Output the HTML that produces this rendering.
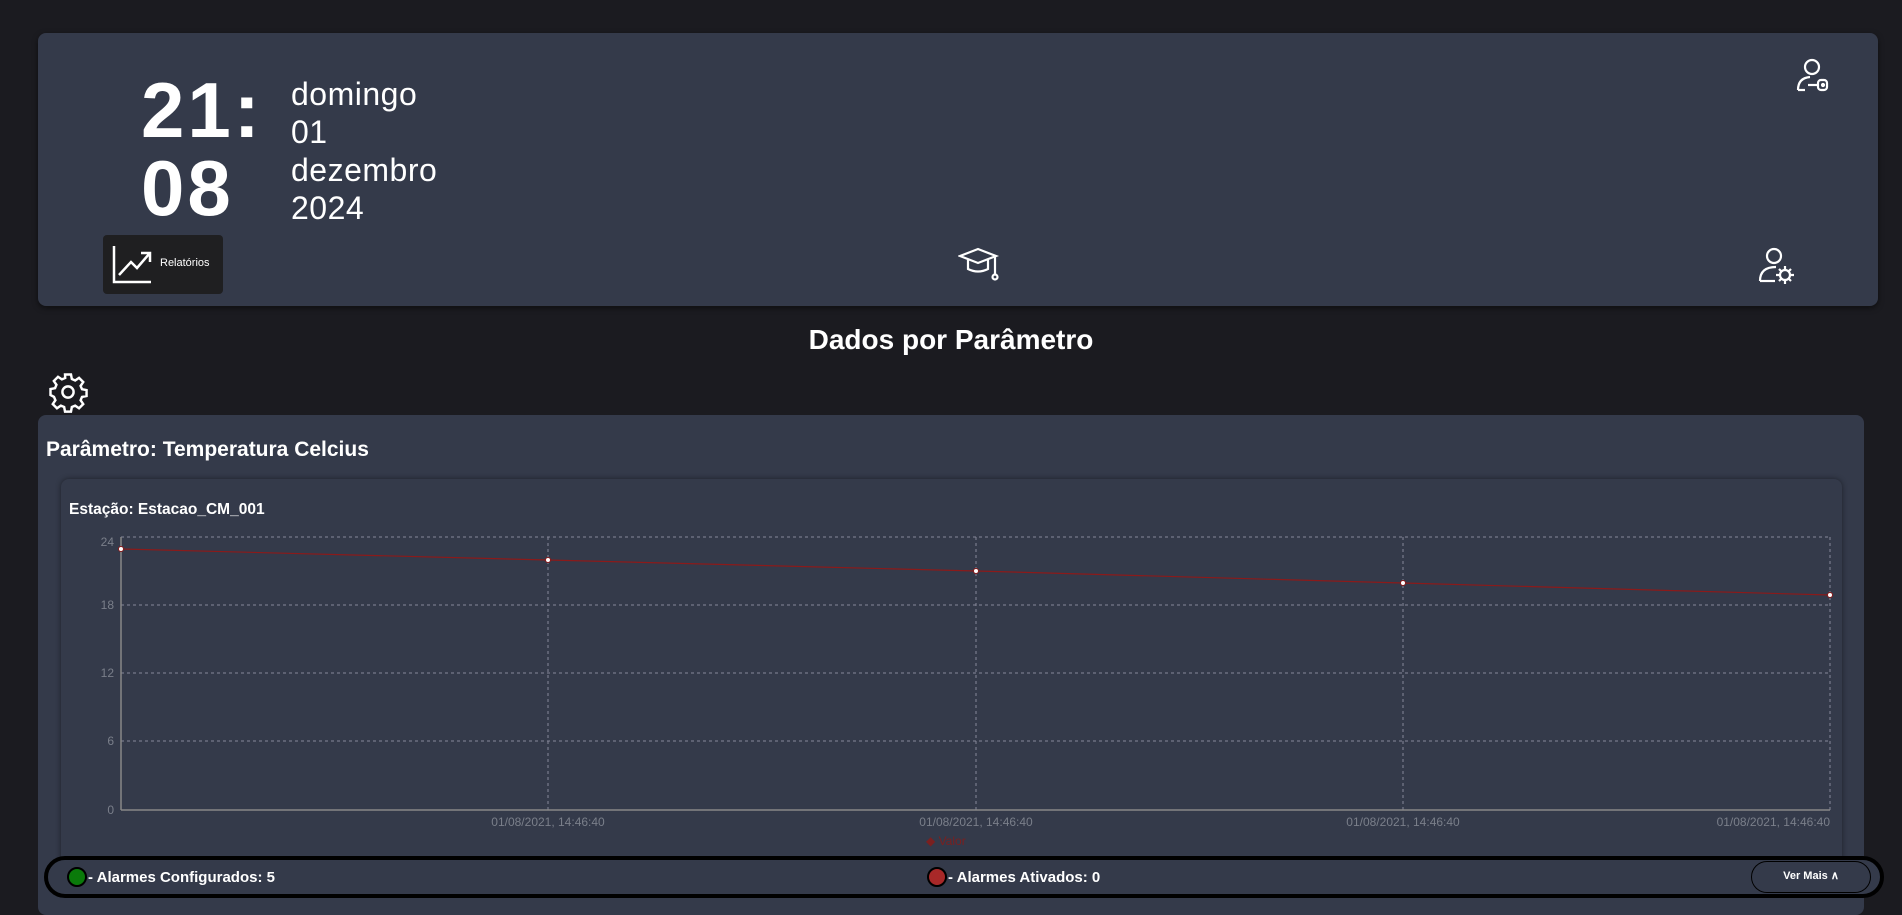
<!DOCTYPE html>
<html><head><meta charset="utf-8"><style>
*{margin:0;padding:0;box-sizing:border-box}
body{width:1902px;height:905px;background:#1b1b20;font-family:"Liberation Sans",sans-serif;color:#fff;position:relative;overflow:hidden}
.abs{position:absolute}
.card{left:38px;top:33px;width:1840px;height:273px;background:#343a4a;border-radius:8px;box-shadow:0 2px 6px rgba(0,0,0,.5)}
.time{left:141px;font-weight:bold;font-size:78px;line-height:78px;letter-spacing:3px}
.date{left:291px;font-size:32px;line-height:38px;letter-spacing:.5px}
.rel{left:103px;top:235px;width:120px;height:59px;background:#1f1f21;border-radius:4px}
.panel{left:38px;top:415px;width:1826px;height:500px;background:#343a4a;border-radius:8px}
.inner{left:61px;top:479px;width:1781px;height:390px;background:#343a4a;border-radius:8px;box-shadow:0 0 6px rgba(0,0,0,.45)}
.bar{left:44px;top:856px;width:1840px;height:42px;border:4px solid #000;border-radius:21px;background:#343a4a}
.bar span{position:absolute;top:9px;font-weight:bold;font-size:15px}
.dot{position:absolute;top:7px;width:20px;height:20px;border-radius:50%;border:2px solid #000}
</style></head><body>
<div class="abs card"></div>
<div class="abs time" style="top:71px">21:</div>
<div class="abs time" style="top:149px">08</div>
<div class="abs date" style="top:75px">domingo</div>
<div class="abs date" style="top:113px">01</div>
<div class="abs date" style="top:151px">dezembro</div>
<div class="abs date" style="top:189px">2024</div>
<div class="abs rel">
<svg class="abs" style="left:8px;top:10px" width="42" height="40" viewBox="0 0 42 40" fill="none" stroke="#fff" stroke-width="2.5"><path d="M3 1V37H40"/><path d="M8 30L20 17L26 23L38 9M30 8H39V17"/></svg>
<div class="abs" style="left:57px;top:22px;font-size:11px">Relatórios</div>
</div>
<svg class="abs" style="left:958px;top:244px" width="42" height="42" viewBox="0 0 42 42" fill="none" stroke="#fff" stroke-width="2.2"><path d="M2 12L20 5L38 12L20 19Z"/><path d="M10 16V25Q20 30 30 25V16"/><path d="M37 12V30"/><circle cx="37" cy="33" r="2.5"/></svg>
<svg class="abs" style="left:1758px;top:247px" width="40" height="40" viewBox="0 0 40 40" fill="none" stroke="#fff" stroke-width="2.2"><circle cx="16" cy="9" r="7"/><path d="M2 34Q2 20 18 20"/><path d="M2 34H17"/><circle cx="27" cy="28" r="5"/><path d="M27 19V22M27 34V37M18 28H21M33 28H36M21 22L23 24M31 32L33 34M21 34L23 32M31 24L33 22"/></svg>
<svg class="abs" style="left:1796px;top:58px" width="36" height="36" viewBox="0 0 36 36" fill="none" stroke="#fff" stroke-width="2.2"><circle cx="16" cy="9" r="7"/><path d="M2 32Q2 20 14 19"/><path d="M2 32H9"/><path d="M12 27H22"/><rect x="22" y="22" width="9" height="10" rx="3"/><circle cx="27" cy="27" r="1"/></svg>
<div class="abs" style="left:0;width:1902px;top:324px;text-align:center;font-weight:bold;font-size:28px">Dados por Parâmetro</div>
<svg class="abs" style="left:47px;top:371px" width="42" height="42" viewBox="0 0 24 24" fill="none" stroke="#fff" stroke-width="1.4"><circle cx="12" cy="12" r="3.2"/><path d="M10.3 2h3.4l.5 2.6 1.9.8 2.2-1.5 2.4 2.4-1.5 2.2.8 1.9 2.6.5v3.4l-2.6.5-.8 1.9 1.5 2.2-2.4 2.4-2.2-1.5-1.9.8-.5 2.6h-3.4l-.5-2.6-1.9-.8-2.2 1.5-2.4-2.4 1.5-2.2-.8-1.9L2 13.7v-3.4l2.6-.5.8-1.9-1.5-2.2 2.4-2.4 2.2 1.5 1.9-.8z"/></svg>
<div class="abs panel"></div>
<div class="abs" style="left:46px;top:438px;font-weight:bold;font-size:21px">Parâmetro: Temperatura Celcius</div>
<div class="abs inner"></div>
<div class="abs" style="left:69px;top:501px;font-weight:bold;font-size:15.5px">Estação: Estacao_CM_001</div>
<svg class="abs" style="left:0;top:0" width="1902" height="905" font-family="Liberation Sans" font-size="12" fill="#7a7f8a">
<g stroke="#aab" stroke-dasharray="3,3" stroke-width="1" opacity=".7">
<line x1="121" y1="537" x2="1830" y2="537"/><line x1="121" y1="605" x2="1830" y2="605"/><line x1="121" y1="673" x2="1830" y2="673"/><line x1="121" y1="741" x2="1830" y2="741"/>
<line x1="548" y1="537" x2="548" y2="810"/><line x1="976" y1="537" x2="976" y2="810"/><line x1="1403" y1="537" x2="1403" y2="810"/><line x1="1830" y1="537" x2="1830" y2="810"/>
</g>
<line x1="121" y1="537" x2="121" y2="810" stroke="#888" stroke-width="1.5"/>
<line x1="121" y1="810" x2="1830" y2="810" stroke="#888" stroke-width="1.5"/>
<text x="114" y="546" text-anchor="end">24</text><text x="114" y="609" text-anchor="end">18</text><text x="114" y="677" text-anchor="end">12</text><text x="114" y="745" text-anchor="end">6</text><text x="114" y="814" text-anchor="end">0</text>
<text x="548" y="826" text-anchor="middle">01/08/2021, 14:46:40</text><text x="976" y="826" text-anchor="middle">01/08/2021, 14:46:40</text><text x="1403" y="826" text-anchor="middle">01/08/2021, 14:46:40</text><text x="1830" y="826" text-anchor="end">01/08/2021, 14:46:40</text>
<text x="926" y="845" fill="#7a2020">◆ Valor</text>
<polyline points="121,549 548,560 976,571 1403,583 1830,595" fill="none" stroke="#8b1a1a" stroke-width="1.2"/>
<g fill="#fff" stroke="#8b1a1a"><circle cx="121" cy="549" r="2.5"/><circle cx="548" cy="560" r="2.5"/><circle cx="976" cy="571" r="2.5"/><circle cx="1403" cy="583" r="2.5"/><circle cx="1830" cy="595" r="2.5"/></g>
</svg>
<div class="abs bar">
<div class="dot" style="left:19px;background:#0a7a0a"></div><span style="left:40px">- Alarmes Configurados: 5</span>
<div class="dot" style="left:879px;background:#a82828"></div><span style="left:900px">- Alarmes Ativados: 0</span>
<div style="position:absolute;left:1703px;top:1px;width:120px;height:32px;border:1.5px solid #000;border-radius:16px;font-size:11px;font-weight:bold;text-align:center;line-height:29px">Ver Mais ∧</div>
</div>
</body></html>
